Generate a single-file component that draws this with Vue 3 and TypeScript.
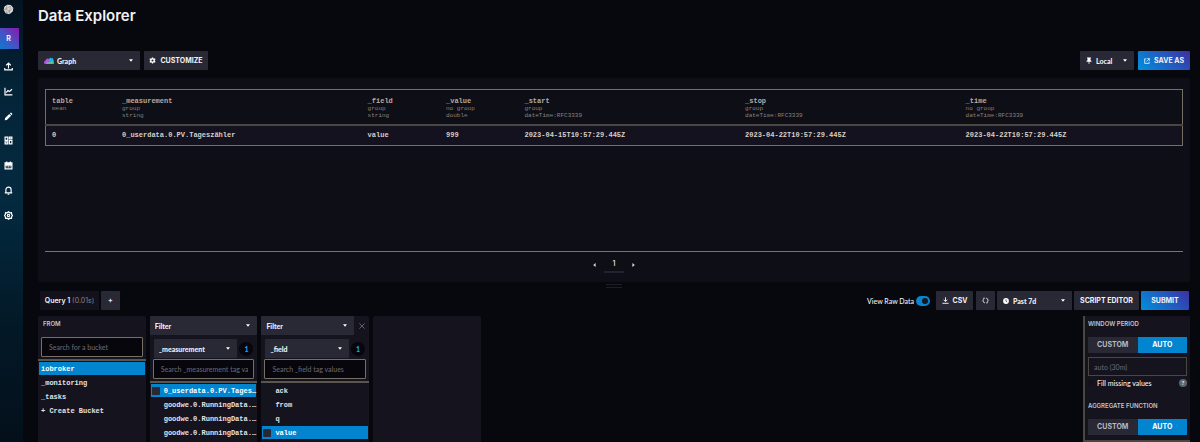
<script setup lang="ts">
import { ref } from 'vue'

interface Column {
  name: string
  group: string
  type: string
  width: string
  value: string
}

interface FilterCard {
  id: string
  tag: string
  placeholder: string
  removable: boolean
  items: { label: string; checked: boolean }[]
}

const columns: Column[] = [
  { name: 'table', group: 'mean', type: '', width: '6.2%', value: '0' },
  { name: '_measurement', group: 'group', type: 'string', width: '21.6%', value: '0_userdata.0.PV.Tageszähler' },
  { name: '_field', group: 'group', type: 'string', width: '6.9%', value: 'value' },
  { name: '_value', group: 'no group', type: 'double', width: '6.9%', value: '999' },
  { name: '_start', group: 'group', type: 'dateTime:RFC3339', width: '19.4%', value: '2023-04-15T10:57:29.445Z' },
  { name: '_stop', group: 'group', type: 'dateTime:RFC3339', width: '19.4%', value: '2023-04-22T10:57:29.445Z' },
  { name: '_time', group: 'no group', type: 'dateTime:RFC3339', width: '19.6%', value: '2023-04-22T10:57:29.445Z' },
]

const buckets = ['iobroker', '_monitoring', '_tasks', '+ Create Bucket']
const activeBucket = ref('iobroker')

const filters = ref<FilterCard[]>([
  {
    id: 'measurement',
    tag: '_measurement',
    placeholder: 'Search _measurement tag va',
    removable: false,
    items: [
      { label: '0_userdata.0.PV.Tages…', checked: true },
      { label: 'goodwe.0.RunningData.…', checked: false },
      { label: 'goodwe.0.RunningData.…', checked: false },
      { label: 'goodwe.0.RunningData.…', checked: false },
    ],
  },
  {
    id: 'field',
    tag: '_field',
    placeholder: 'Search _field tag values',
    removable: true,
    items: [
      { label: 'ack', checked: false },
      { label: 'from', checked: false },
      { label: 'q', checked: false },
      { label: 'value', checked: true },
    ],
  },
])

const rawData = ref(true)
const fillMissing = ref(false)
</script>

<template>
  <div class="app">
    <aside class="sidebar">
      <a class="logo" href="#" aria-label="Home">
        <svg viewBox="0 0 12 12" width="11" height="11">
          <path d="M4.4.8 8.6 1.2 11.3 4.4 10.6 8.3 7 11.3 2.8 10.2.8 6.3 1.4 3Z" fill="#dedad8" />
          <path d="M4.4 1 3.2 5.2 7 7.9 10.6 4.6M3.2 5.2 1 6.2M3.2 5.2 4 10M7 7.9 7.2 11M7 7.9 4 9.6M3.2 5.2 8.4 2.2 7 7.9" fill="none" stroke="#8a8382" stroke-width=".6" />
        </svg>
      </a>
      <button class="org" type="button">R</button>
      <nav class="nav">
        <a href="#" aria-label="Load Data">
          <svg viewBox="0 0 10 10"><path d="M5 7.2V1.4M2.4 3.8 5 1.2l2.6 2.6M.8 6.8v2h8.4v-2" /></svg>
        </a>
        <a href="#" aria-label="Data Explorer">
          <svg viewBox="0 0 10 10"><path d="M1.1.9v7.8h8.2M2.4 6.2 4.4 4l1.7 1.1 2.8-2.6" /></svg>
        </a>
        <a href="#" aria-label="Notebooks">
          <svg viewBox="0 0 10 10"><path class="solid" d="M1.2 6.8 5.9 2.1l2 2-4.7 4.7-2.3.4ZM6.5 1.5l.9-.8q.4-.2.7.1l1.1 1.1q.3.4 0 .7l-.8.9Z" /></svg>
        </a>
        <a href="#" aria-label="Dashboards">
          <svg viewBox="0 0 10 10"><path d="M1.2 1.2h3v3.6h-3ZM6 1.2h2.8v2H6ZM1.2 6.6h3v2.2h-3ZM6 5h2.8v3.8H6Z" /></svg>
        </a>
        <a href="#" aria-label="Tasks">
          <svg viewBox="0 0 10 10"><path d="M1.2 2h7.6v6.8H1.2ZM1.2 4.5h7.6M3 .6V2M7 .6V2M2.8 6.5h1M4.6 6.5h1M6.3 6.5h1M2 3.2h6" /></svg>
        </a>
        <a href="#" aria-label="Alerts">
          <svg viewBox="0 0 10 10"><path d="M.9 7.7h8.2M2.1 7.5V4.2a2.9 2.9 0 0 1 5.8 0v3.3M5 .5v.9M4 9.2h2" /></svg>
        </a>
        <a href="#" aria-label="Settings">
          <svg viewBox="0 0 10 10"><path d="M5 .8 6.4 2l1.9-.1.2 1.9L9.4 5l-.9 1.3-.2 1.8L6.4 8 5 9.2 3.6 8l-1.9.1-.2-1.8L.6 5l.9-1.2.2-1.9 1.9.1Z" /><circle cx="5" cy="5" r="1.3" /></svg>
        </a>
      </nav>
    </aside>

    <main class="page">
      <h1>Data Explorer</h1>

      <div class="toolbar">
        <div class="select graph">
          <svg class="lead" viewBox="0 0 10 7" width="10" height="7">
            <path d="M3.5 6.6 4.4 2.6 6.4.4 7.6 1.4 8.6.8 9.8 3.4v3.2Z" fill="#1fb4e8" />
            <path d="M0 6.6V5L2.8 1.8 4.3 1.4 5.4 3.4 8 6.6Z" fill="#b653e6" />
            <path d="M.6 6.7 3.8 5.2 5.6 5.6 7.6 4.2 9.8 5.8v.9Z" fill="#5fd08c" />
          </svg>
          <select aria-label="Visualization type"><option>Graph</option></select>
          <svg class="caret" viewBox="0 0 4 3" width="4" height="3"><path d="M0 .3h4L2 2.8Z" /></svg>
        </div>
        <button class="btn customize" type="button">
          <svg viewBox="0 0 8 8" width="7" height="7">
            <path fill-rule="evenodd" d="M3.3.5h1.4l.2 1 .8.4 1-.4.8 1.2-.8.7v1.2l.8.7-.8 1.2-1-.4-.8.4-.2 1H3.3l-.2-1-.8-.4-1 .4L.5 5.3l.8-.7V3.4l-.8-.7.8-1.2 1 .4.8-.4ZM4 2.8a1.2 1.2 0 1 0 0 2.4 1.2 1.2 0 0 0 0-2.4Z" fill="#fff" />
          </svg>
          CUSTOMIZE
        </button>
        <span class="spacer"></span>
        <div class="select local">
          <svg class="lead" viewBox="0 0 6 7" width="6" height="7">
            <path d="M1 .4h4v.9l-.5.3v1.6l1 .9v.7H3.4v2L3 7l-.4-.2v-2H.5v-.7l1-.9V1.6L1 1.3Z" fill="#fff" />
          </svg>
          <select aria-label="Time zone"><option>Local</option></select>
          <svg class="caret" viewBox="0 0 4 3" width="4" height="3"><path d="M0 .3h4L2 2.8Z" /></svg>
        </div>
        <button class="btn primary save" type="button">
          <svg viewBox="0 0 7 7" width="6" height="6">
            <path d="M2.8 1H.8v5.3H6V4.2M3 4 6 1M4 .7h2.3V3" fill="none" stroke="#fff" stroke-width=".9" />
          </svg>
          SAVE AS
        </button>
      </div>

      <section class="results">
        <div class="scroll">
          <table>
            <colgroup>
              <col v-for="c in columns" :key="c.name" :style="{ width: c.width }" />
            </colgroup>
            <thead>
              <tr>
                <th v-for="c in columns" :key="c.name" scope="col">
                  {{ c.name }}
                  <small>{{ c.group }}</small>
                  <small>{{ c.type }}</small>
                </th>
              </tr>
            </thead>
            <tbody>
              <tr>
                <td v-for="c in columns" :key="c.name">{{ c.value }}</td>
              </tr>
            </tbody>
          </table>
        </div>
        <div class="pager">
          <button type="button" aria-label="Previous page">
            <svg viewBox="0 0 3 4" width="3" height="4"><path d="M2.6 0v4L.2 2Z" /></svg>
          </button>
          <button type="button" class="current">1</button>
          <button type="button" aria-label="Next page">
            <svg viewBox="0 0 3 4" width="3" height="4"><path d="M.4 0v4L2.8 2Z" /></svg>
          </button>
        </div>
      </section>

      <div class="handle"></div>

      <div class="querybar">
        <button class="tab" type="button">Query 1 <span>(0.01s)</span></button>
        <button class="btn add" type="button" aria-label="Add query">+</button>
        <span class="spacer"></span>
        <label class="raw">
          View Raw Data
          <input v-model="rawData" type="checkbox" role="switch" />
        </label>
        <button class="btn csv" type="button">
          <svg viewBox="0 0 7 7" width="7" height="7">
            <path d="M3.5.3v4M1.6 2.7l1.9 1.9 1.9-1.9M.4 6.3h6.2" fill="none" stroke="#fff" stroke-width=".9" />
          </svg>
          CSV
        </button>
        <button class="btn refresh" type="button" aria-label="Refresh">
          <svg viewBox="0 0 7 7" width="7" height="7">
            <path d="M2.9 5.9A2.4 2.4 0 0 1 2.3 1.4M4.1 1.1A2.4 2.4 0 0 1 4.7 5.6M1.3 1.2h1.4M5.7 5.8H4.3" fill="none" stroke="#e8e8ec" stroke-width=".9" />
          </svg>
        </button>
        <div class="select range">
          <svg class="lead" viewBox="0 0 6 6" width="6" height="6">
            <circle cx="3" cy="3" r="2.9" fill="#fff" />
            <path d="M3 1.3V3.2l1.2.7" fill="none" stroke="#292933" stroke-width=".7" />
          </svg>
          <select aria-label="Time range"><option>Past 7d</option></select>
          <svg class="caret" viewBox="0 0 4 3" width="4" height="3"><path d="M0 .3h4L2 2.8Z" /></svg>
        </div>
        <button class="btn script" type="button">SCRIPT EDITOR</button>
        <button class="btn primary submit" type="button">SUBMIT</button>
      </div>

      <div class="builder">
        <section class="card from">
          <h2>FROM</h2>
          <input class="search" type="text" placeholder="Search for a bucket" aria-label="Search for a bucket" />
          <ul class="list">
            <li v-for="b in buckets" :key="b">
              <button type="button" :class="{ active: b === activeBucket }" @click="activeBucket = b">{{ b }}</button>
            </li>
          </ul>
        </section>

        <section v-for="f in filters" :key="f.id" class="card">
          <div class="head">
            <div class="select kind">
              <select aria-label="Builder function"><option>Filter</option></select>
              <svg class="caret" viewBox="0 0 4 3" width="4" height="3"><path d="M0 .3h4L2 2.8Z" /></svg>
            </div>
            <button v-if="f.removable" class="close" type="button" aria-label="Remove filter">
              <svg viewBox="0 0 6 6" width="6" height="6"><path d="M.4.4l5.2 5.2M5.6.4.4 5.6" /></svg>
            </button>
          </div>
          <div class="tag">
            <div class="select key">
              <select :aria-label="'Tag key ' + f.tag"><option>{{ f.tag }}</option></select>
              <svg class="caret" viewBox="0 0 4 3" width="4" height="3"><path d="M0 .3h4L2 2.8Z" /></svg>
            </div>
            <span class="count">1</span>
          </div>
          <input class="search" type="text" :placeholder="f.placeholder" :aria-label="f.placeholder" />
          <ul class="list">
            <li v-for="(item, i) in f.items" :key="i">
              <label :class="{ active: item.checked }">
                <input v-model="item.checked" type="checkbox" />
                <span>{{ item.label }}</span>
              </label>
            </li>
          </ul>
        </section>

        <section class="card"></section>
        <span class="spacer"></span>

        <section class="options">
          <h2>WINDOW PERIOD</h2>
          <div class="toggle">
            <button type="button">CUSTOM</button>
            <button type="button" class="on">AUTO</button>
          </div>
          <input class="period" type="text" placeholder="auto (30m)" aria-label="Window period" disabled />
          <div class="fill">
            <label><input v-model="fillMissing" type="checkbox" />Fill missing values</label>
            <button type="button" aria-label="Help">?</button>
          </div>
          <h2>AGGREGATE FUNCTION</h2>
          <div class="toggle">
            <button type="button">CUSTOM</button>
            <button type="button" class="on">AUTO</button>
          </div>
        </section>
      </div>
    </main>
  </div>
</template>

<style>
body {
  background: #07070e;
  overflow: hidden;
}
</style>

<style scoped>
* {
  box-sizing: border-box;
}

.app {
  --sans: Inter, 'Open Sans', sans-serif;
  --text: Lato, 'Open Sans', sans-serif;
  --mono: 'Liberation Mono', monospace;
  display: flex;
  min-height: 100vh;
  background: #07070e;
  color: #f1f1f3;
  font: 500 7px/10px var(--text);
}

button,
input,
select {
  margin: 0;
  padding: 0;
  border: 0;
  border-radius: 0;
  background: none;
  color: inherit;
  font: inherit;
}

h1,
h2,
ul {
  margin: 0;
  padding: 0;
  list-style: none;
}

svg {
  display: block;
  flex: none;
}

.spacer {
  flex: 1;
}

/* Sidebar */
.sidebar {
  display: flex;
  flex: none;
  flex-direction: column;
  width: 23px;
  background: linear-gradient(#031320, #042438 20%, #042a40 45%, #031826 75%, #03101b);
}

.logo {
  padding: 4px 0 0 3px;
}

.org {
  width: 19px;
  height: 21px;
  margin-top: 13px;
  padding-right: 2px;
  background: linear-gradient(45deg, #0a7bd0, #4b4fc4 50%, #8a17a8);
  font-family: var(--sans);
  font-weight: 700;
}

.nav {
  display: flex;
  flex-direction: column;
  justify-content: space-between;
  height: 158px;
  margin: 13px 0 0 4px;
}

.nav svg {
  width: 9px;
  height: 9px;
  fill: none;
  stroke: #fff;
  stroke-width: 1.3;
}

.nav .solid {
  fill: #fff;
  stroke: none;
}

/* Page */
.page {
  display: flex;
  flex: 1;
  flex-direction: column;
  min-width: 0;
  padding: 6px 10px 0 15px;
}

h1 {
  font: 600 15px/20px var(--sans);
}

.toolbar {
  display: flex;
  gap: 4px;
  margin-top: 25px;
}

.btn,
.select {
  display: flex;
  align-items: center;
  justify-content: center;
  height: 19px;
  border-radius: 1px;
  background: #292835;
  font-weight: 700;
}

.btn {
  gap: 4px;
  font-family: var(--sans);
  white-space: nowrap;
}

.primary {
  background: linear-gradient(45deg, #0090dc, #2558bd 60%, #3d2ea0);
}

.select {
  position: relative;
}

.select select {
  width: 100%;
  height: 100%;
  padding-left: 5px;
  font-weight: 900;
  appearance: none;
}

.select option {
  background: #292835;
}

.lead {
  position: absolute;
  left: 6px;
  pointer-events: none;
}

.caret {
  position: absolute;
  right: 7px;
  fill: #fff;
  pointer-events: none;
}

.graph {
  width: 102px;
}

.graph select {
  padding-left: 19px;
}

.customize {
  width: 64px;
}

.local {
  width: 54px;
}

.local select,
.range select {
  padding-left: 16px;
}

.save {
  width: 52px;
}

/* Results */
.results {
  margin-top: 8px;
  padding: 11px 7px 0;
  border-radius: 2px;
  background: #0e0e16;
}

.scroll {
  min-height: 163px;
  border-bottom: 1px solid #7a7368;
}

table {
  width: 100%;
  border: 1px solid #756f65;
  border-collapse: collapse;
  table-layout: fixed;
  font-family: var(--mono);
}

th,
td {
  padding: 0 6px;
  overflow: hidden;
  text-align: left;
  white-space: nowrap;
}

th {
  height: 35px;
  padding-top: 7px;
  border-bottom: 2px solid #4a4642;
  color: #b5aca2;
  font-size: 7px;
  font-weight: 700;
  line-height: 8px;
  vertical-align: top;
}

th small {
  display: block;
  height: 7px;
  color: #8a827b;
  font-size: 6px;
  font-weight: 400;
  line-height: 7px;
}

td {
  height: 21px;
  background: #13121e;
  color: #d8cfc6;
  font-size: 7px;
  font-weight: 700;
}

.pager {
  display: flex;
  justify-content: center;
  padding: 5px 0 9px;
}

.pager button {
  display: grid;
  place-items: center;
  width: 19px;
  height: 16px;
  font-family: var(--sans);
  font-weight: 600;
}

.pager svg {
  fill: #ddd5ca;
}

.pager .current {
  width: 20px;
  border-bottom: 2px solid #232230;
  color: #ddd5ca;
}

.handle {
  width: 16px;
  height: 4px;
  margin: 2px auto 0;
  border: solid #1d1c28;
  border-width: 1px 0;
}

/* Query bar */
.querybar {
  display: flex;
  align-items: center;
  gap: 2px;
  margin-top: 3px;
  padding: 0 1px 0 2px;
}

.tab {
  width: 59px;
  height: 19px;
  border-radius: 1px;
  background: #13121c;
  font-family: var(--sans);
  font-weight: 600;
  white-space: nowrap;
}

.tab span {
  color: #85838c;
  font-weight: 400;
}

.add {
  width: 19px;
}

.raw {
  display: flex;
  align-items: center;
  gap: 2px;
  margin-right: 4px;
  white-space: nowrap;
}

.raw input {
  display: flex;
  align-items: center;
  width: 14px;
  height: 10px;
  padding: 0 2px;
  border-radius: 5px;
  background: #2b2a38;
  appearance: none;
}

.raw input:checked {
  justify-content: flex-end;
  background: #0a84d0;
}

.raw input::before {
  width: 6px;
  height: 6px;
  border-radius: 50%;
  background: #17171f;
  content: '';
}

.csv {
  width: 37px;
  margin-right: 1px;
}

.refresh {
  width: 19px;
}

.range {
  width: 75px;
}

.script {
  width: 65px;
}

.submit {
  width: 48px;
}

/* Builder */
.builder {
  display: flex;
  flex: 1;
  gap: 4px;
  margin-top: 6px;
}

.card {
  display: flex;
  flex: none;
  flex-direction: column;
  width: 9.35%;
  border-radius: 2px 2px 0 0;
  background: #14131e;
}

h2 {
  color: #c6c3c8;
  font: 600 6px/8px var(--sans);
}

.from h2 {
  padding: 4px 0 9px 5px;
}

.search {
  height: 20px;
  margin: 0 3px;
  padding: 0 5px 0 7px;
  border: 1px solid #756f65;
  border-radius: 1px;
  background: #06060c;
}

.search::placeholder,
.period::placeholder {
  color: #66646e;
  opacity: 1;
}

.list {
  margin-top: 2px;
  padding: 1px;
  border-top: 2px solid #5a554e;
  font: 700 7px/14px var(--mono);
}

.list li {
  height: 14px;
}

.list button,
.list label {
  display: flex;
  align-items: center;
  width: 100%;
  height: 13px;
  color: #e6e2e2;
  text-align: left;
  white-space: nowrap;
}

.list button {
  padding-left: 2px;
}

.list .active {
  background: #0284cf;
  color: #fff;
}

.list input {
  flex: none;
  width: 8px;
  height: 8px;
  margin: 0 4px 0 1px;
  border-radius: 1px;
  appearance: none;
}

.list input:checked {
  background: #292835;
}

.head {
  display: flex;
  height: 19px;
}

.kind {
  flex: 1;
}

.close {
  display: grid;
  place-items: center;
  width: 15px;
}

.close path {
  stroke: #777580;
  stroke-width: 0.8;
}

.tag {
  display: flex;
  align-items: center;
  gap: 2px;
  margin: 4px 4px 1px;
}

.key {
  flex: 1;
}

.count {
  width: 14px;
  height: 14px;
  border-radius: 50%;
  background: #06060c;
  color: #22a3f6;
  font-weight: 900;
  line-height: 14px;
  text-align: center;
}

/* Aggregation options */
.options {
  flex: none;
  width: 107px;
  padding: 4px 3px 0;
  border: solid #4a4642;
  border-width: 0 0 2px 2px;
  background: #14131e;
}

.toggle {
  display: flex;
  height: 16px;
  margin: 9px 0 4px;
}

.toggle button {
  flex: 1;
  background: #292835;
  color: #bcb8bd;
  font-family: var(--sans);
  font-weight: 700;
}

.toggle .on {
  background: #0284cf;
  color: #fff;
}

.period {
  width: 100%;
  height: 19px;
  padding: 0 5px;
  border: 1px solid #4a4642;
}

.fill {
  display: flex;
  align-items: center;
  justify-content: space-between;
  margin: 2px 0 14px;
}

.fill label {
  display: flex;
  align-items: center;
}

.fill input {
  width: 6px;
  height: 6px;
  margin-right: 3px;
  background: #12111b;
  appearance: none;
}

.fill input:checked {
  background: #0284cf;
}

.fill button {
  width: 8px;
  height: 8px;
  border-radius: 50%;
  background: #5d646c;
  font-size: 6px;
  font-weight: 700;
  line-height: 8px;
}
</style>
